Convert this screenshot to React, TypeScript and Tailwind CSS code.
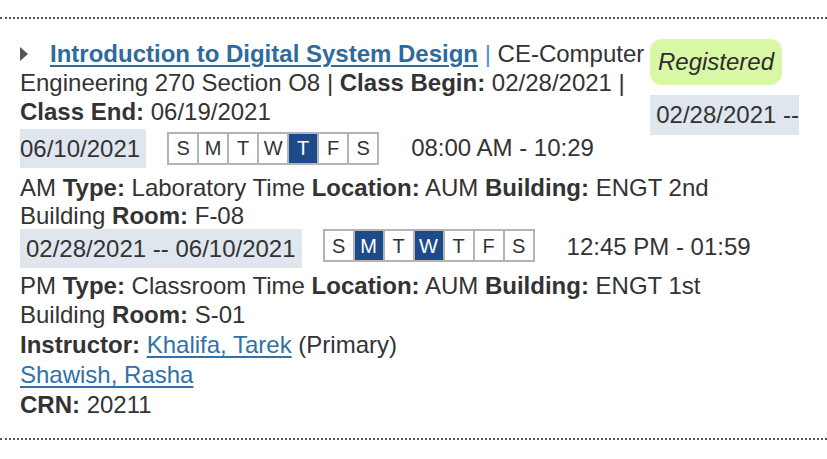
const days = ["S", "M", "T", "W", "T", "F", "S"];

function DayTable({ active, className }: { active: number[]; className?: string }) {
  return (
    <table className={`border-collapse ${className ?? ""}`}>
      <tbody>
        <tr>
          {days.map((d, i) => (
            <td
              key={i}
              className={`border-2 border-[#b4b4b4] w-[30px] h-[31px] p-0 text-center text-[20px] leading-none ${
                active.includes(i) ? "bg-[#1d4a88] text-white" : "bg-white text-[#333]"
              }`}
            >
              {d}
            </td>
          ))}
        </tr>
      </tbody>
    </table>
  );
}

export default function App() {
  return (
    <div className="min-h-[459px] bg-white pt-[17px] font-['Liberation_Sans',Arial,sans-serif] text-[24px] text-[#333]">
      <div className="border-t-2 border-dotted border-[#555]" />

      <div className="mt-[20px] pl-[20px]">
        {/* heading + status */}
        <div className="flex">
          <div className="w-[630px]">
            <div className="flex h-[29px] items-center whitespace-nowrap">
              <svg width="8" height="14" viewBox="0 0 8 14" className="mr-[22px] shrink-0">
                <polygon points="0,0 8,7 0,14" fill="#555" />
              </svg>
              <a href="#" className="font-bold text-[#2e6a9c] underline decoration-2 underline-offset-[3px]">
                Introduction to Digital System Design
              </a>
              <span className="whitespace-pre text-[#4a8fd8]"> | </span>
              <span>CE-Computer</span>
            </div>
            <div className="flex h-[29px] items-center whitespace-pre">
              <span>
                Engineering 270 Section O8 | <b>Class Begin:</b> 02/28/2021 |
              </span>
            </div>
          </div>
          <div className="flex h-[46px] w-[132px] items-center justify-center rounded-[12px] bg-[#d9f8a6] italic text-[#2d2d2d]">
            Registered
          </div>
        </div>

        {/* class end + first meeting start */}
        <div className="flex h-[29px] w-[779px] items-start whitespace-pre">
          <span className="leading-[29px]">
            <b>Class End:</b> 06/19/2021
          </span>
          <span className="ml-auto -mt-[2px] h-[40px] bg-[#dfe6ee] pl-[6px] leading-[40px]">02/28/2021 --</span>
        </div>

        {/* first meeting */}
        <div className="mt-[2px] flex h-[40px] items-center whitespace-pre">
          <span className="h-[39px] bg-[#dfe6ee] pr-[6px] leading-[39px]">06/10/2021</span>
          <DayTable active={[4]} className="ml-[21px]" />
          <span className="ml-[32px]">08:00 AM - 10:29</span>
        </div>
        <div className="mt-[5px] flex h-[29px] items-center whitespace-pre">
          <span>
            AM <b>Type:</b> Laboratory Time <b>Location:</b> AUM <b>Building:</b> ENGT 2nd
          </span>
        </div>
        <div className="flex h-[27px] items-center whitespace-pre">
          <span>
            Building <b>Room:</b> F-08
          </span>
        </div>

        {/* second meeting */}
        <div className="flex h-[39px] items-start whitespace-pre">
          <span className="h-[39px] bg-[#dfe6ee] px-[6px] leading-[39px]">02/28/2021 -- 06/10/2021</span>
          <DayTable active={[1, 3]} className="ml-[21px]" />
          <span className="ml-[32px] leading-[36px]">12:45 PM - 01:59</span>
        </div>
        <div className="mt-[3px] flex h-[29px] items-center whitespace-pre">
          <span>
            PM <b>Type:</b> Classroom Time <b>Location:</b> AUM <b>Building:</b> ENGT 1st
          </span>
        </div>
        <div className="flex h-[30px] items-center whitespace-pre">
          <span>
            Building <b>Room:</b> S-01
          </span>
        </div>

        {/* instructors */}
        <div className="flex h-[30px] items-center whitespace-pre">
          <b>Instructor: </b>
          <a href="#" className="text-[#3271a5] underline underline-offset-[3px]">
            Khalifa, Tarek
          </a>
          <span> (Primary)</span>
        </div>
        <div className="flex h-[30px] items-center whitespace-pre">
          <a href="#" className="text-[#3271a5] underline underline-offset-[3px]">
            Shawish, Rasha
          </a>
        </div>
        <div className="flex h-[30px] items-center whitespace-pre">
          <b>CRN: </b>
          <span>20211</span>
        </div>
      </div>

      <div className="mt-[18px] border-t-2 border-dotted border-[#555]" />
    </div>
  );
}
